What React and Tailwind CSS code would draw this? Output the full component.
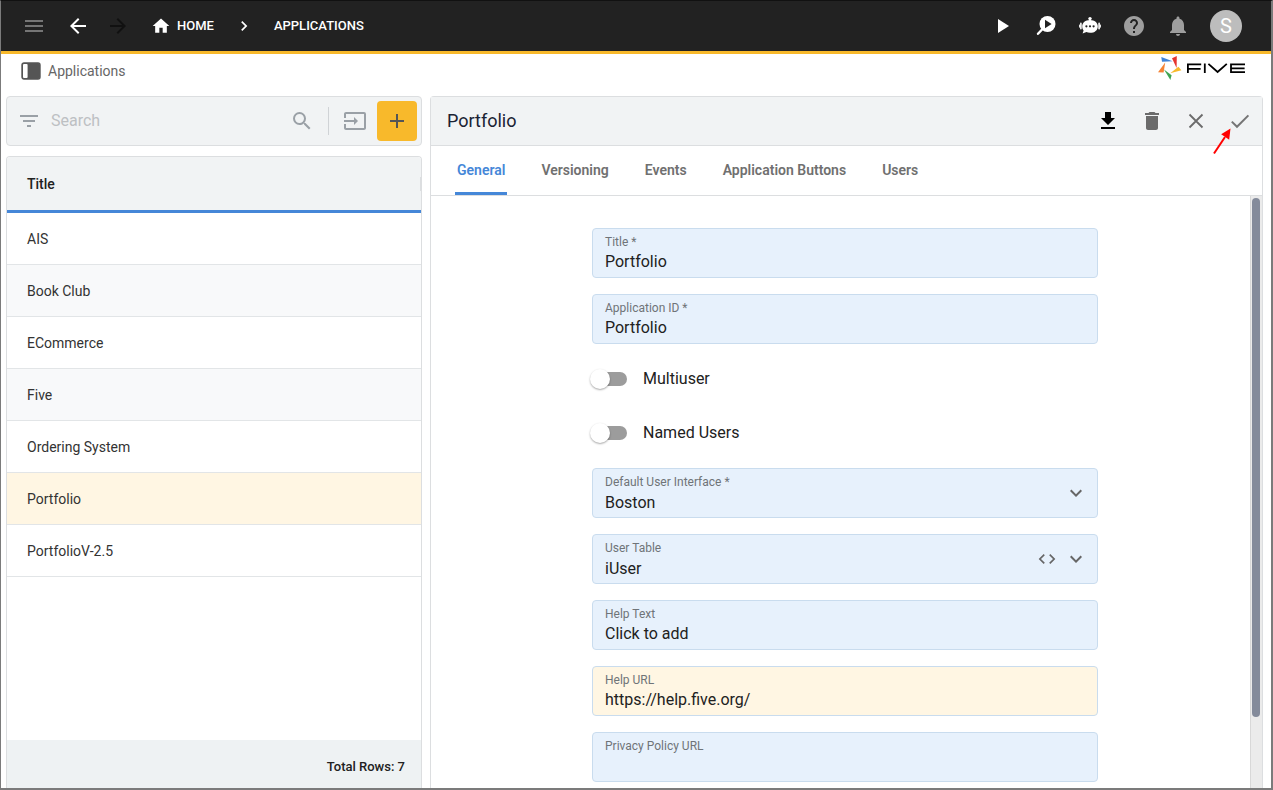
import React, { useState } from 'react';
import {
  MdMenu,
  MdArrowBack,
  MdArrowForward,
  MdHome,
  MdNavigateNext,
  MdPlayArrow,
  MdHelp,
  MdNotifications,
  MdFilterList,
  MdSearch,
  MdInput,
  MdAdd,
  MdDelete,
  MdExpandMore,
  MdCode,
} from 'react-icons/md';

const applications = ['AIS', 'Book Club', 'ECommerce', 'Five', 'Ordering System', 'Portfolio', 'PortfolioV-2.5'];
const tabs = ['General', 'Versioning', 'Events', 'Application Buttons', 'Users'];

const InspectIcon = () => (
  <svg viewBox="0 0 20 20" className="h-5 w-5">
    <circle cx="11.5" cy="8" r="8" fill="#fff" />
    <path d="M7 12.5 L2 17.8" stroke="#fff" strokeWidth="2.4" strokeLinecap="round" />
    <path d="M9 3.8 V12.2 L15.6 8 Z" fill="#222" />
  </svg>
);

const BotIcon = () => (
  <svg viewBox="0 0 22 20" className="h-5 w-[22px]">
    <circle cx="11" cy="2.6" r="1.7" fill="#fff" />
    <path d="M11 3 V5" stroke="#fff" strokeWidth="1.4" />
    <path d="M11 4 C15.6 4 18.8 6.8 18.8 10.4 C18.8 14.2 15.6 16.8 11 16.8 C9.6 16.8 8.4 16.6 7.4 16.1 L3.6 17.6 L4.6 14.4 C3.6 13.2 3.2 11.9 3.2 10.4 C3.2 6.8 6.4 4 11 4 Z" fill="#fff" />
    <path d="M1.9 7.4 V12.8 M20.1 7.4 V12.8" stroke="#fff" strokeWidth="1.6" strokeLinecap="round" />
    <path d="M0.6 9 V11.2 M21.4 9 V11.2" stroke="#fff" strokeWidth="1" strokeLinecap="round" />
    <circle cx="7.4" cy="10.3" r="1.1" fill="#222" />
    <circle cx="11" cy="10.3" r="1.1" fill="#222" />
    <circle cx="14.6" cy="10.3" r="1.1" fill="#222" />
  </svg>
);

const PanelIcon = () => (
  <svg viewBox="0 0 20 18" className="h-[18px] w-5">
    <rect x="1" y="1" width="18" height="16" rx="2" fill="#555" stroke="#555" strokeWidth="1.4" />
    <rect x="2" y="2" width="4.6" height="14" rx="1" fill="#fff" />
  </svg>
);

const FiveLogo = () => (
  <svg viewBox="0 0 88 24" className="h-6 w-[88px]" role="img" aria-label="Five">
    <path d="M3.3 1 L14.6 5.2 L4 5.8 Z" fill="#3f83d8" />
    <path d="M18.8 0 L18.6 12 L14 2.2 Z" fill="#e5342f" />
    <path d="M0 16.2 L7.2 6.4 L5.6 16.6 Z" fill="#f58233" />
    <path d="M23.4 14.2 L12.2 17.2 L20.4 10.8 Z" fill="#f7b92a" />
    <path d="M12.4 24 L6 13.6 L13.6 19.2 Z" fill="#3fa553" />
    <g fill="none" stroke="#000" strokeWidth="1.8">
      <path d="M29.9 17 V8.4 H43.2 M29.4 12.8 H42.6" />
      <path d="M46.8 7.5 V17" />
      <path d="M50.4 7.8 L59.6 16 L68.8 7.8" />
      <path d="M87 8.4 H73 V16.2 H87 M73 12.3 H86.6" />
    </g>
  </svg>
);

const DownloadIcon = () => (
  <svg viewBox="0 0 24 24" className="h-6 w-6" fill="#000">
    <path d="M9 3 H15 V9 H19 L12 16 L5 9 H9 Z M5 18 H19 V20 H5 Z" />
  </svg>
);

const CloseIcon = () => (
  <svg viewBox="0 0 24 24" className="h-6 w-6" fill="none" stroke="#6b6b6b" strokeWidth="1.8">
    <path d="M5.5 5.5 L18.5 18.5 M18.5 5.5 L5.5 18.5" />
  </svg>
);

const CheckIcon = () => (
  <svg viewBox="0 0 24 24" className="h-6 w-6" fill="none" stroke="#757575" strokeWidth="2">
    <path d="M3.8 12.6 L9 17.8 L20.4 6.4" />
  </svg>
);

const PointerArrow = () => (
  <svg viewBox="0 0 20 28" className="pointer-events-none absolute -left-4 top-[18px] h-7 w-5">
    <path d="M2 26.5 L13 10" stroke="#f00" strokeWidth="2" />
    <path d="M18.5 1.5 L17.2 12.8 L9.2 7.2 Z" fill="#f00" />
  </svg>
);

const TopBar = () => (
  <header className="flex h-[53px] shrink-0 items-center justify-between border-b-[3px] border-[#f8b92b] bg-[#222] pl-[21px] pr-[29px] text-white">
    <div className="flex items-center">
      <button aria-label="Menu" className="text-[#757575]"><MdMenu className="h-6 w-6" /></button>
      <button aria-label="Back" className="ml-5"><MdArrowBack className="h-6 w-6" /></button>
      <button aria-label="Forward" className="ml-4 text-[#111]" disabled><MdArrowForward className="h-6 w-6" /></button>
      <nav className="ml-[21px] flex items-center text-[13px] font-medium">
        <a href="#home" className="flex items-center gap-1.5">
          <MdHome className="h-5 w-5" />
          HOME
        </a>
        <MdNavigateNext className="mx-5 h-5 w-5" />
        <a href="#applications">APPLICATIONS</a>
      </nav>
    </div>
    <div className="flex items-center gap-5">
      <button aria-label="Run"><MdPlayArrow className="h-6 w-6" /></button>
      <button aria-label="Inspect" className="flex w-6 justify-center"><InspectIcon /></button>
      <button aria-label="Assistant" className="flex w-6 justify-center"><BotIcon /></button>
      <button aria-label="Help" className="text-[#9e9e9e]"><MdHelp className="h-6 w-6" /></button>
      <button aria-label="Notifications" className="text-[#9e9e9e]"><MdNotifications className="h-6 w-6" /></button>
      <button aria-label="Account" className="h-8 w-8 rounded-full bg-[#bdbdbd] text-xl">S</button>
    </div>
  </header>
);

const SearchBar = () => (
  <div className="flex h-[50px] shrink-0 items-center rounded border border-[#dcdee0] bg-[#f1f3f4] pl-2.5 pr-1 text-[#9aa0a6]">
    <button aria-label="Filter"><MdFilterList className="h-6 w-6" /></button>
    <input
      type="text"
      aria-label="Search"
      placeholder="Search"
      className="ml-2.5 min-w-0 flex-1 bg-transparent text-base placeholder:text-[#bdc0c3] focus:outline-none"
    />
    <button aria-label="Search"><MdSearch className="h-6 w-6" /></button>
    <div className="mx-3.5 h-7 border-l border-[#d0d3d6]" />
    <button aria-label="Import"><MdInput className="h-6 w-6" /></button>
    <button aria-label="Add" className="ml-2.5 flex h-10 w-10 items-center justify-center rounded bg-[#f8b92b] text-[#555]">
      <MdAdd className="h-6 w-6" />
    </button>
  </div>
);

const ApplicationList = () => (
  <div className="flex flex-1 flex-col overflow-hidden rounded-t border-x border-t border-[#dcdee0]">
    <table className="w-full border-separate border-spacing-0 text-left text-sm text-[#333]">
      <thead>
        <tr className="bg-[#f1f3f4]">
          <th className="h-14 border-b-[3px] border-[#4587d8] px-5 font-medium text-[#212121]">
            <div className="flex items-center justify-between">
              Title
              <span className="-mr-5 h-3.5 border-r border-[#dcdee0]" />
            </div>
          </th>
        </tr>
      </thead>
      <tbody>
        {applications.map((name) => (
          <tr key={name} className={name === 'Portfolio' ? 'bg-[#fff6e3]' : 'even:bg-[#f8f9fa]'}>
            <td className="h-13 border-b border-[#e2e5e7] px-5">{name}</td>
          </tr>
        ))}
      </tbody>
    </table>
    <div className="mt-auto flex h-12 items-center justify-end bg-[#eef2f3] px-4 pt-1.5 text-[13px] font-medium text-[#212121]">
      Total Rows: {applications.length}
    </div>
  </div>
);

const fieldBox = 'relative h-[50px] rounded border border-[#c9dcee] focus-within:border-[#4587d8]';
const fieldLabel = 'pointer-events-none absolute left-3 top-[5px] text-xs leading-4 text-[#6f7478]';
const fieldValue = 'h-full w-full bg-transparent px-3 text-base text-[#212121] focus:outline-none';

const TextField = ({ id, label, value, highlighted }) => (
  <div className={`${fieldBox} ${highlighted ? 'bg-[#fff6e3]' : 'bg-[#e7f1fc]'}`}>
    <label htmlFor={id} className={fieldLabel}>{label}</label>
    <input id={id} type="text" defaultValue={value} className={`${fieldValue} pt-4`} />
  </div>
);

const SelectField = ({ id, label, value, withCode }) => (
  <div className={`${fieldBox} bg-[#e7f1fc]`}>
    <label htmlFor={id} className={fieldLabel}>{label}</label>
    <select id={id} defaultValue={value} className={`${fieldValue} appearance-none pt-5`}>
      <option>{value}</option>
    </select>
    <div className="pointer-events-none absolute inset-y-0 right-[9px] flex items-center gap-[7px] text-[#666]">
      {withCode && <MdCode className="h-5 w-5" />}
      <MdExpandMore className="h-6 w-6" />
    </div>
  </div>
);

const Toggle = ({ label }) => (
  <label className="flex h-[38px] cursor-pointer items-center gap-4 text-base text-[#212121]">
    <span className="relative flex h-5 w-[35px] items-center">
      <input type="checkbox" className="peer h-3.5 w-full appearance-none rounded-full bg-[#9c9c9c] checked:bg-[#4587d8]" />
      <span className="pointer-events-none absolute -left-0.5 h-5 w-5 rounded-full bg-white shadow-[0_1px_2px_rgba(0,0,0,0.35)] peer-checked:translate-x-4" />
    </span>
    {label}
  </label>
);

const GeneralForm = () => (
  <form className="mx-auto flex w-full max-w-[506px] flex-col gap-4 py-8">
    <TextField id="title" label="Title *" value="Portfolio" />
    <TextField id="app-id" label="Application ID *" value="Portfolio" />
    <Toggle label="Multiuser" />
    <Toggle label="Named Users" />
    <SelectField id="default-ui" label="Default User Interface *" value="Boston" />
    <SelectField id="user-table" label="User Table" value="iUser" withCode />
    <TextField id="help-text" label="Help Text" value="Click to add" />
    <TextField id="help-url" label="Help URL" value="https://help.five.org/" highlighted />
    <TextField id="privacy-url" label="Privacy Policy URL" value="" />
  </form>
);

const DetailPanel = () => {
  const [activeTab, setActiveTab] = useState('General');

  return (
    <section className="flex min-w-0 flex-1 flex-col rounded-t border-x border-t border-[#dcdee0]">
      <div className="flex h-[49px] shrink-0 items-center justify-between border-b border-[#dcdee0] bg-[#f1f3f4] pl-4 pr-2.5">
        <h1 className="text-lg text-[#1a2233]">Portfolio</h1>
        <div className="flex items-center gap-5 text-[#6b6b6b]">
          <button aria-label="Download"><DownloadIcon /></button>
          <button aria-label="Delete"><MdDelete className="h-6 w-6" /></button>
          <button aria-label="Close"><CloseIcon /></button>
          <button aria-label="Save" className="relative">
            <CheckIcon />
            <PointerArrow />
          </button>
        </div>
      </div>
      <div role="tablist" className="flex h-[50px] shrink-0 gap-8 border-b border-[#dcdee0] px-6 text-sm font-semibold">
        {tabs.map((tab) => (
          <button
            key={tab}
            role="tab"
            aria-selected={tab === activeTab}
            onClick={() => setActiveTab(tab)}
            className={`border-b-[3px] px-0.5 pt-0.5 ${tab === activeTab ? 'border-[#4587d8] text-[#4587d8]' : 'border-transparent text-[#707070]'}`}
          >
            {tab}
          </button>
        ))}
      </div>
      <div className="flex min-h-0 flex-1">
        <div className="min-w-0 flex-1 overflow-y-auto pl-[9px] [scrollbar-width:none]">
          <GeneralForm />
        </div>
        <div className="w-3 border-l border-[#d8d8d8] bg-[#ebebeb] px-px pt-0.5">
          <div className="h-[88%] w-2 rounded-full bg-[#848b9b]" />
        </div>
      </div>
    </section>
  );
};

const App = () => {
  return (
    <div className="flex h-screen flex-col border-b-2 border-l border-r-2 border-t border-[#7b7b7b] border-t-[#111] bg-white font-[Roboto,sans-serif]">
      <TopBar />
      <div className="flex h-[42px] shrink-0 items-center justify-between pb-2 pl-5 pr-[25px]">
        <div className="flex items-center gap-[7px] text-sm text-[#666]">
          <PanelIcon />
          Applications
        </div>
        <div className="self-start pt-0.5">
          <FiveLogo />
        </div>
      </div>
      <main className="flex min-h-0 flex-1 gap-2 pl-[5px] pr-2">
        <div className="flex w-1/3 max-w-[416px] flex-col gap-2.5">
          <SearchBar />
          <ApplicationList />
        </div>
        <DetailPanel />
      </main>
    </div>
  );
};

export default App;
